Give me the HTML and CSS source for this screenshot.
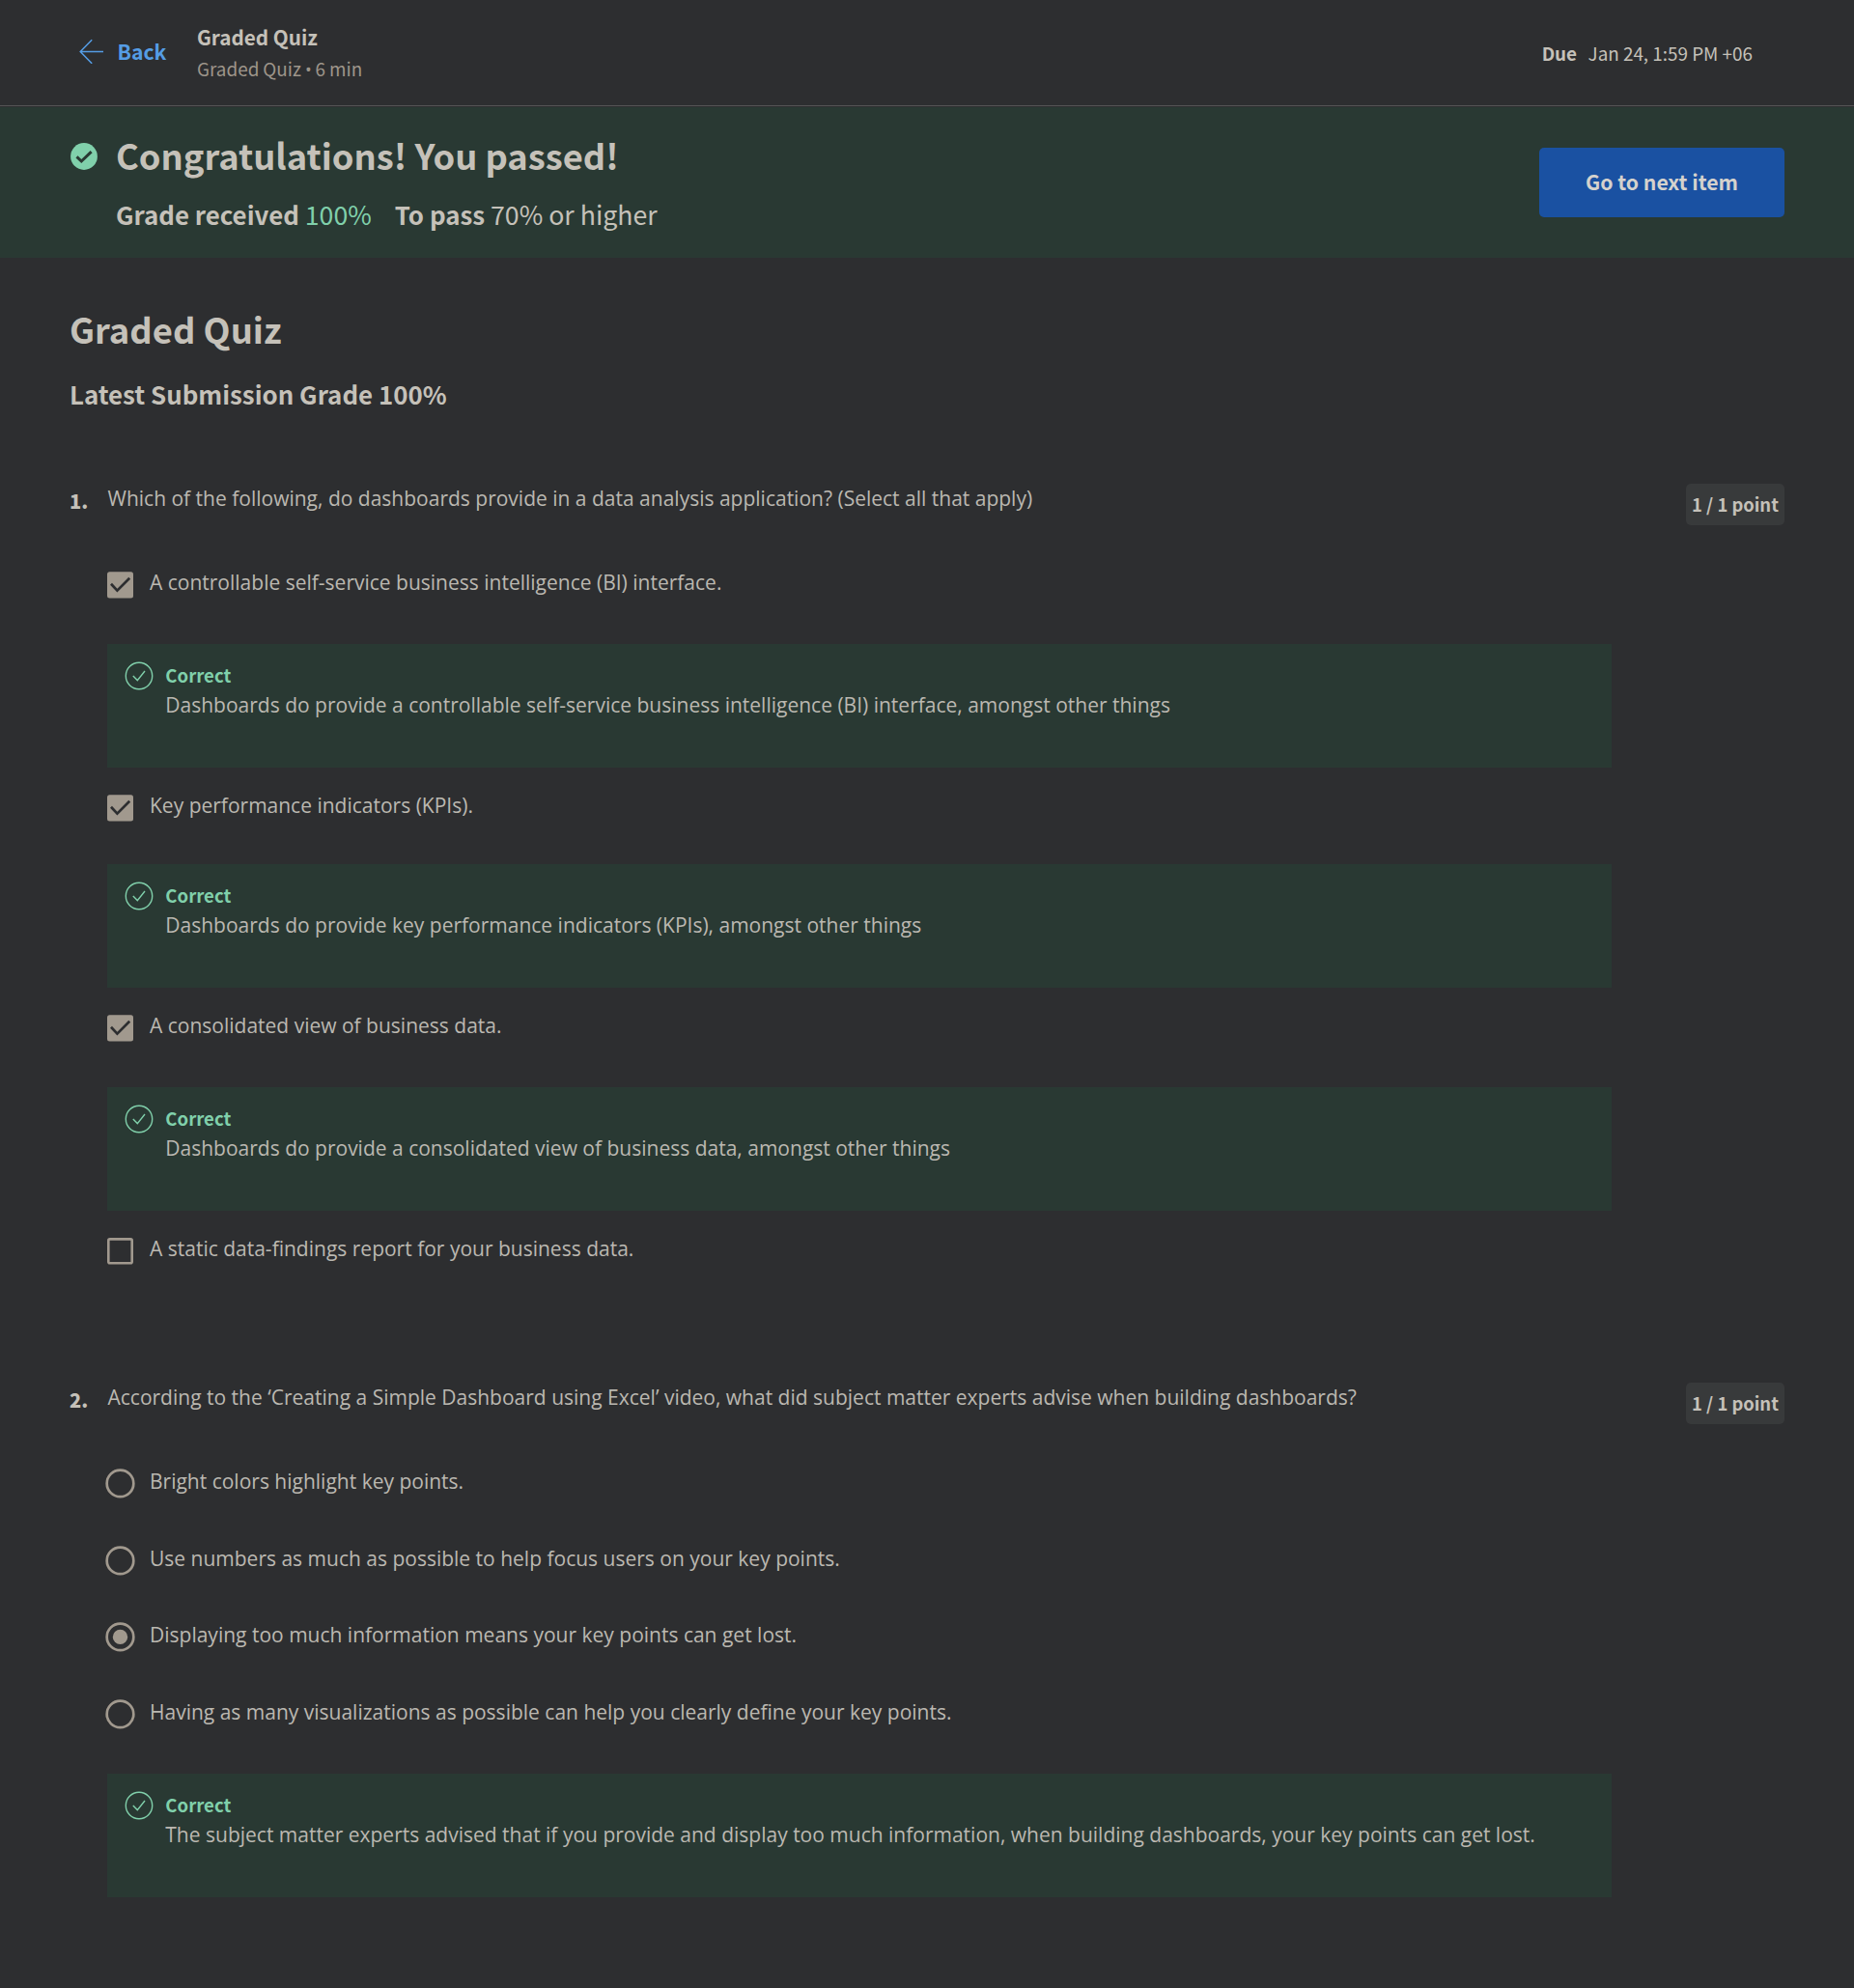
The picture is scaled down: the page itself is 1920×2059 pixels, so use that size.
FILE: index.html
```
<!DOCTYPE html>
<html lang="en">
<head>
<meta charset="utf-8">
<title>Graded Quiz</title>
<link rel="stylesheet" href="styles.css">
</head>
<body>
<svg width="0" height="0" class="sprite" aria-hidden="true">
  <symbol id="box-on" viewBox="0 0 28 28"><rect x="0" y="0.2" width="27" height="27.3" rx="2.5" fill="#a1998e"/><path d="M4 12.8 10.4 19.6 23.2 6.8" fill="none" stroke="#2d2e30" stroke-width="2.7"/></symbol>
  <symbol id="box-off" viewBox="0 0 28 28"><rect x="1.3" y="1.4" width="24.4" height="24.8" rx="1.5" fill="none" stroke="#a1998e" stroke-width="2.6"/></symbol>
  <symbol id="radio-off" viewBox="0 0 32 32"><circle cx="16.5" cy="16.4" r="13.8" fill="none" stroke="#a1998e" stroke-width="2.7"/></symbol>
  <symbol id="radio-on" viewBox="0 0 32 32"><circle cx="16.5" cy="16.4" r="13.8" fill="none" stroke="#a1998e" stroke-width="2.7"/><circle cx="16.5" cy="16.4" r="7.7" fill="#a1998e"/></symbol>
  <symbol id="ok" viewBox="0 0 30 30"><g fill="none" stroke="#80d0ab" stroke-width="1.4"><circle cx="15" cy="15" r="13.7"/><path d="M8.8 14.9 13.3 19.6 21 10"/></g></symbol>
</svg>

<header class="topbar">
  <a class="back">
    <svg width="26" height="26" viewBox="0 0 26 26" fill="none" stroke="#559de5" stroke-width="1.5"><path d="M25 13.6H1.2M13.2 1.3 1.2 13.6 13.2 25.8"/></svg>
    <span>Back</span>
  </a>
  <div class="heading">
    <div class="heading-title">Graded Quiz</div>
    <div class="heading-meta">Graded Quiz <span class="dot">•</span> 6 min</div>
  </div>
  <div class="due"><b>Due</b><span>Jan 24, 1:59 PM +06</span></div>
</header>

<section class="banner">
  <svg class="banner-icon" width="28" height="28" viewBox="0 0 28 28"><circle cx="14" cy="14" r="13.9" fill="#80d0ab"/><path d="M6.5 14.4 11.3 19 21.6 9.2" fill="none" stroke="#293933" stroke-width="3"/></svg>
  <div class="result">
    <h1>Congratulations! You passed!</h1>
    <p class="grades"><b>Grade received</b> <span class="score">100%</span><b class="pass">To pass</b> <span>70% or higher</span></p>
  </div>
  <button class="next">Go to next item</button>
</section>

<main>
  <h2>Graded Quiz</h2>
  <h3>Latest Submission Grade 100%</h3>

  <section class="question">
    <div class="number">1.</div>
    <div class="prompt">Which of the following, do dashboards provide in a data analysis application? (Select all that apply)</div>
    <div class="points">1 / 1 point</div>
    <div class="answers">
      <div class="option"><svg class="check"><use href="#box-on"/></svg>A controllable self-service business intelligence (BI) interface.</div>
      <div class="feedback"><svg class="ok"><use href="#ok"/></svg><div><b>Correct</b><p>Dashboards do provide a controllable self-service business intelligence (BI) interface, amongst other things</p></div></div>
      <div class="option option-short"><svg class="check"><use href="#box-on"/></svg>Key performance indicators (KPIs).</div>
      <div class="feedback"><svg class="ok"><use href="#ok"/></svg><div><b>Correct</b><p>Dashboards do provide key performance indicators (KPIs), amongst other things</p></div></div>
      <div class="option"><svg class="check"><use href="#box-on"/></svg>A consolidated view of business data.</div>
      <div class="feedback"><svg class="ok"><use href="#ok"/></svg><div><b>Correct</b><p>Dashboards do provide a consolidated view of business data, amongst other things</p></div></div>
      <div class="option"><svg class="check"><use href="#box-off"/></svg>A static data-findings report for your business data.</div>
    </div>
  </section>

  <section class="question">
    <div class="number">2.</div>
    <div class="prompt">According to the ‘Creating a Simple Dashboard using Excel’ video, what did subject matter experts advise when building dashboards?</div>
    <div class="points">1 / 1 point</div>
    <div class="answers">
      <div class="option option-radio"><svg class="radio"><use href="#radio-off"/></svg>Bright colors highlight key points.</div>
      <div class="option option-radio"><svg class="radio"><use href="#radio-off"/></svg>Use numbers as much as possible to help focus users on your key points.</div>
      <div class="option option-radio"><svg class="radio"><use href="#radio-on"/></svg>Displaying too much information means your key points can get lost.</div>
      <div class="option"><svg class="radio"><use href="#radio-off"/></svg>Having as many visualizations as possible can help you clearly define your key points.</div>
      <div class="feedback"><svg class="ok"><use href="#ok"/></svg><div><b>Correct</b><p>The subject matter experts advised that if you provide and display too much information, when building dashboards, your key points can get lost.</p></div></div>
    </div>
  </section>
</main>
</body>
</html>
```
FILE: styles.css
```
* { box-sizing: border-box; }
body {
  margin: 0;
  min-height: 2059px;
  background: #2d2e30;
  color: #c5c1b9;
  font-family: "Noto Sans CJK SC", sans-serif;
}
h1, h2, h3, p { margin: 0; }
svg { display: block; flex: none; }
.sprite { position: absolute; }

.topbar {
  display: flex;
  align-items: flex-start;
  height: 110px;
  margin-bottom: 1px;
  padding: 24px 105px 0 82px;
  border-bottom: 1px solid #545455;
}
.back {
  display: flex;
  align-items: center;
  gap: 13.5px;
  width: 122px;
  margin-top: 14px;
  color: #559de5;
  font-size: 21.2px;
  font-weight: 700;
  line-height: 30px;
}
.heading-title { font-size: 20.7px; font-weight: 700; line-height: 28px; }
.heading-meta { margin-top: 5px; font-size: 18.9px; line-height: 28px; color: #9d958a; word-spacing: -0.3px; }
.dot { font-family: "Open Sans", sans-serif; font-size: 18px; line-height: 1; }
.due { display: flex; gap: 11.5px; margin: 17px 0 0 auto; font-size: 18.85px; line-height: 28px; }

.banner {
  display: flex;
  align-items: flex-start;
  height: 156px;
  padding: 26px 72px 0 73px;
  background: #293933;
}
.banner-icon { margin-top: 11px; }
.result { margin-left: 19px; }
h1 { margin-top: -1px; font-size: 36.3px; line-height: 48px; }
.grades { margin-top: 20px; font-size: 26.7px; line-height: 36px; }
.grades b { font-size: 25.85px; }
.score { color: #80d0ab; }
.pass { margin-left: 24px; }
.next {
  width: 254px;
  height: 72px;
  padding: 0 0 3px;
  margin: 16px 0 0 auto;
  border: 0;
  border-radius: 5px;
  background: #1a51a2;
  color: #d5d2cd;
  font: 700 21.2px/69px "Noto Sans CJK SC", sans-serif;
}

main { padding: 49px 72px 0 71px; }
h2 { margin-left: 1px; font-size: 36.4px; line-height: 48px; }
h3 { margin: 26px 0 0 1px; font-size: 25.85px; line-height: 36px; }

.question {
  display: grid;
  grid-template-columns: 40px 1fr 102px;
  grid-template-rows: 89px auto;
  margin-top: 74px;
}
.question + .question { margin-top: 74px; }
.number { margin: 5px 0 0 1px; font-size: 20px; font-weight: 900; line-height: 28px; }
.prompt { margin-left: 0.5px; font: 21px/32px "Open Sans", sans-serif; color: #bbb8b1; }
.points {
  height: 43px;
  margin-top: 1px;
  border-radius: 5px;
  background: #383a3b;
  font-size: 18.4px;
  font-weight: 700;
  line-height: 43px;
  text-align: center;
}
.answers { grid-column: 2 / 4; width: 1558px; }
.option {
  display: flex;
  height: 78px;
  font: 21.01px/28px "Open Sans", sans-serif;
  color: #bbb8b1;
}
.option-short { height: 75px; }
.option-radio { height: 79.5px; }
.check { width: 28px; height: 28px; margin: 3px 16px 0 0; }
.radio { width: 32px; height: 32px; margin: 0 15px 0 -3px; }
.feedback {
  display: flex;
  gap: 12.3px;
  height: 128px;
  padding: 18px 0 0 18px;
  margin-bottom: 25px;
  background: #293933;
}
.ok { width: 30px; height: 30px; }
.feedback b { display: block; font-size: 18.6px; line-height: 28px; color: #80d0ab; }
.feedback p { margin-top: 1px; font: 21.01px/32px "Open Sans", sans-serif; color: #bbb8b1; white-space: nowrap; }
```
